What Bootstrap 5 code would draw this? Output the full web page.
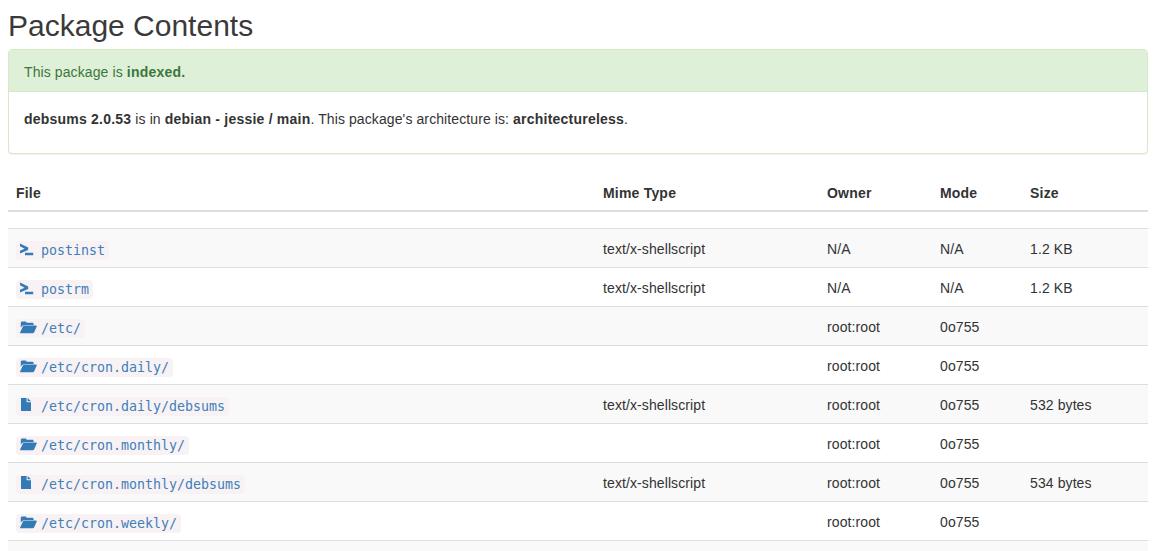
<!DOCTYPE html>
<html lang="en">
<head>
<meta charset="utf-8">
<title>Package Contents</title>
<link href="https://cdn.jsdelivr.net/npm/bootstrap@5.3.0/dist/css/bootstrap.min.css" rel="stylesheet">
<style>
html,body{overflow:hidden;height:551px}
body{font-family:"Liberation Sans",Arial,sans-serif;font-size:14px;line-height:20px;color:#333;background:#fff}
.pkg-wrap{padding:0 8px}
.pkg-title{font-family:"Liberation Sans",Arial,sans-serif;font-size:30px;font-weight:400;line-height:33px;color:#3a3a3a;margin:9px 0 7px}
.pkg-panel{border:1px solid #d6e9c6;border-radius:4px;box-shadow:0 1px 1px rgba(0,0,0,.05);margin-bottom:20px;--bs-card-inner-border-radius:3px}
.pkg-panel .card-header{background:#dff0d8;color:#3c763d;border-bottom:1px solid #d6e9c6;padding:12px 15px 9px;font-size:14px;letter-spacing:.1px}
.pkg-panel .card-body{padding:17px 15px 14px;font-size:14px;color:#333;letter-spacing:.1px}
.pkg-panel p{margin:0 0 10px}
.pkg-panel b{font-weight:700;letter-spacing:.22px}
.pkg-table{font-size:14px;letter-spacing:.1px;margin:0;table-layout:fixed;width:100%;--bs-table-striped-bg:#f9f9f9;--bs-table-striped-color:#333;--bs-table-color:#333;--bs-table-border-color:#ddd}
.pkg-table>thead>tr>th{padding:9px 8px 7px;border-bottom:2px solid #ddd;font-weight:700;line-height:20px;color:#333;letter-spacing:.2px}
.pkg-table>thead>tr.pkg-spacer>th{padding:0;height:17px;border-bottom:1px solid #ddd}
.pkg-table>tbody>tr>td{padding:10px 8px 6px;height:39px;line-height:20px;border-bottom:1px solid #ddd;border-top:0;vertical-align:top}
.col-file{width:587px}.col-mime{width:224px}.col-owner{width:113px}.col-mode{width:90px}
.pkg-code{display:inline-flex;align-items:flex-start;vertical-align:top;margin-top:2px;font-family:"DejaVu Sans Mono","Liberation Mono",monospace;font-size:13.29px;line-height:19px;letter-spacing:0;padding:0 4px;background:#f9f2f4;border-radius:4px;color:#3d80ba;text-decoration:none;white-space:nowrap}
.pkg-ico{flex:none;width:17px;height:14px;margin:1px 4px 0 0;fill:#337ab7}
</style>
</head>
<body>
<div class="pkg-wrap">
  <h2 class="pkg-title">Package Contents</h2>
  <div class="card pkg-panel">
    <div class="card-header">This package is <b>indexed.</b></div>
    <div class="card-body"><p><b>debsums 2.0.53</b> is in <b>debian - jessie / main</b>. This package's architecture is: <b>architectureless</b>.</p></div>
  </div>
  <svg width="0" height="0" class="d-block">
    <defs>
      <symbol id="i-term" viewBox="0 0 17 14"><path d="M0 1.4 8.2 5.4v2.6L0 11.4V8.8L4.6 6.7 0 4.2zM5 10.8h8.2v2.4H5z"/></symbol>
      <symbol id="i-folder" viewBox="0 0 17 14"><path d="M.8 7.8V3C.8 2.2 1.4 1.6 2.2 1.6h3c.8 0 1.2.4 1.4 1.2h5.6c.8 0 1.4.4 1.4 1.2v1H4.8C3 5 2 5.8.8 7.8zM.6 13.2c-.5 0-.7-.3-.5-.8L2.9 6.6c.3-.7.9-1 1.7-1h11.4c.7 0 1 .4.7.9l-2.5 5.7c-.3.7-.9 1-1.7 1z"/></symbol>
      <symbol id="i-file" viewBox="0 0 17 14"><path d="M1 0H6.6V4.2H11V13H1zM7.6 0 11 3.2H7.6z"/></symbol>
    </defs>
  </svg>
  <table class="table table-striped pkg-table">
    <colgroup><col class="col-file"><col class="col-mime"><col class="col-owner"><col class="col-mode"><col></colgroup>
    <thead>
      <tr><th>File</th><th>Mime Type</th><th>Owner</th><th>Mode</th><th>Size</th></tr>
      <tr class="pkg-spacer"><th colspan="5"></th></tr>
    </thead>
    <tbody>
      <tr><td><a class="pkg-code" href="#"><svg class="pkg-ico"><use href="#i-term"/></svg>postinst</a></td><td>text/x-shellscript</td><td>N/A</td><td>N/A</td><td>1.2 KB</td></tr>
      <tr><td><a class="pkg-code" href="#"><svg class="pkg-ico"><use href="#i-term"/></svg>postrm</a></td><td>text/x-shellscript</td><td>N/A</td><td>N/A</td><td>1.2 KB</td></tr>
      <tr><td><a class="pkg-code" href="#"><svg class="pkg-ico"><use href="#i-folder"/></svg>/etc/</a></td><td></td><td>root:root</td><td>0o755</td><td></td></tr>
      <tr><td><a class="pkg-code" href="#"><svg class="pkg-ico"><use href="#i-folder"/></svg>/etc/cron.daily/</a></td><td></td><td>root:root</td><td>0o755</td><td></td></tr>
      <tr><td><a class="pkg-code" href="#"><svg class="pkg-ico"><use href="#i-file"/></svg>/etc/cron.daily/debsums</a></td><td>text/x-shellscript</td><td>root:root</td><td>0o755</td><td>532 bytes</td></tr>
      <tr><td><a class="pkg-code" href="#"><svg class="pkg-ico"><use href="#i-folder"/></svg>/etc/cron.monthly/</a></td><td></td><td>root:root</td><td>0o755</td><td></td></tr>
      <tr><td><a class="pkg-code" href="#"><svg class="pkg-ico"><use href="#i-file"/></svg>/etc/cron.monthly/debsums</a></td><td>text/x-shellscript</td><td>root:root</td><td>0o755</td><td>534 bytes</td></tr>
      <tr><td><a class="pkg-code" href="#"><svg class="pkg-ico"><use href="#i-folder"/></svg>/etc/cron.weekly/</a></td><td></td><td>root:root</td><td>0o755</td><td></td></tr>
      <tr><td></td><td></td><td></td><td></td><td></td></tr>
    </tbody>
  </table>
</div>
<script src="https://cdn.jsdelivr.net/npm/bootstrap@5.3.0/dist/js/bootstrap.bundle.min.js"></script>
</body>
</html>
